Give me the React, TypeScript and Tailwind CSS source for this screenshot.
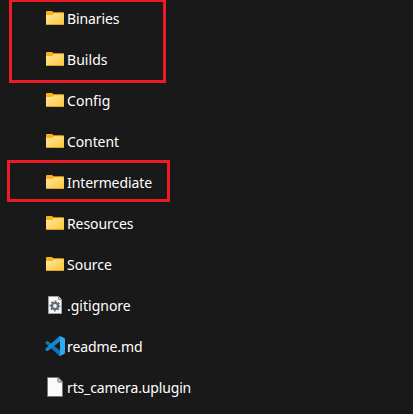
import type { ReactNode } from 'react';

function FolderIcon() {
  return (
    <svg width="18" height="14" viewBox="0 0 18 14" className="block">
      <defs>
        <linearGradient id="folder" x1="0" y1="0" x2="1" y2="1">
          <stop offset="0" stopColor="#ffe7a0" />
          <stop offset="1" stopColor="#fbc736" />
        </linearGradient>
      </defs>
      <path d="M0 1Q0 0 1 0H6L7.6 1.2H17Q18 1.2 18 2.2V5H0Z" fill="#f9b115" />
      <path d="M0 4H6.2L8 2.2H18V13Q18 14 17 14H1Q0 14 0 13Z" fill="url(#folder)" />
      <path d="M0 13H18Q18 14 17 14H1Q0 14 0 13Z" fill="#e0a02c" />
    </svg>
  );
}

function GearFileIcon() {
  return (
    <svg width="14" height="18" viewBox="0 0 14 18" className="block">
      <path d="M.5.5H10.5L13.5 3.5V17.5H.5Z" fill="#f8f8f8" stroke="#a0a0a0" />
      <path d="M10.5 .5V3.5H13.5" fill="#d9d9d9" stroke="#8b8b8b" />
      <circle cx="7" cy="10" r="3.1" fill="none" stroke="#5f707b" strokeWidth="2.4" />
      <circle cx="7" cy="10" r="4.6" fill="none" stroke="#5f707b" strokeWidth="1.6" strokeDasharray="1.806 1.806" strokeDashoffset="0.9" />
    </svg>
  );
}

function CodeIcon() {
  return (
    <svg width="20" height="20" viewBox="0 0 20 20" className="block">
      <path d="M.4 6.3 1.7 5.1Q2.2 4.7 2.8 5.1L15 14.4V19.8Q14.3 19.7 13.8 19.2L.4 7.2Q0 6.8 .4 6.3Z" fill="#1173b5" />
      <path d="M.4 13.7 1.7 14.9Q2.2 15.3 2.8 14.9L15 5.6V.2Q14.3 .3 13.8 .8L.4 12.8Q0 13.2 .4 13.7Z" fill="#1488cf" />
      <path d="M13.7 19.5Q15 19.9 15 18.6V1.4Q15 .1 13.7 .5Q14.4-.2 15.4 .3L19.2 2.1Q20 2.5 20 3.4V16.6Q20 17.5 19.2 17.9L15.4 19.7Q14.4 20.2 13.7 19.5Z" fill="#2aabf5" />
    </svg>
  );
}

function FileIcon() {
  return (
    <svg width="16" height="20" viewBox="0 0 16 20" className="block">
      <path d="M.5.5H11L15.5 5V19.5H.5Z" fill="#fafafa" stroke="#777" />
      <path d="M11 .5V5H15.5Z" fill="#dedede" stroke="#777" />
    </svg>
  );
}

const entries: { name: string; icon: ReactNode; tracking: string }[] = [
  { name: 'Binaries', icon: <FolderIcon />, tracking: 'tracking-[-0.1px]' },
  { name: 'Builds', icon: <FolderIcon />, tracking: 'tracking-[0.05px]' },
  { name: 'Config', icon: <FolderIcon />, tracking: 'tracking-[0.05px]' },
  { name: 'Content', icon: <FolderIcon />, tracking: 'tracking-[-0.1px]' },
  { name: 'Intermediate', icon: <FolderIcon />, tracking: 'tracking-[-0.1px]' },
  { name: 'Resources', icon: <FolderIcon />, tracking: 'tracking-[-0.1px]' },
  { name: 'Source', icon: <FolderIcon />, tracking: 'tracking-[0px]' },
  { name: '.gitignore', icon: <GearFileIcon />, tracking: 'tracking-[0px]' },
  { name: 'readme.md', icon: <CodeIcon />, tracking: 'tracking-[-0.1px]' },
  { name: 'rts_camera.uplugin', icon: <FileIcon />, tracking: 'tracking-[-0.15px]' },
];

export default function App() {
  return (
    <main className="relative h-[414px] w-[413px] overflow-hidden bg-[#191919] font-['Noto_Sans','Open_Sans',sans-serif] text-[14px] text-white">
      <ul className="-mt-0.5 pl-[45px]">
        {entries.map((entry) => (
          <li key={entry.name} className="mb-px flex h-10 items-center">
            <span className="flex w-5 justify-center">{entry.icon}</span>
            <span className={`ml-[2px] whitespace-nowrap pt-px leading-5 ${entry.tracking}`}>{entry.name}</span>
          </li>
        ))}
      </ul>
      <div className="absolute -top-px left-[9px] h-[84px] w-[157px] border-3 border-[#ed1c24]" />
      <div className="absolute left-[7px] top-[160px] h-[42px] w-[163px] border-3 border-[#ed1c24]" />
    </main>
  );
}
